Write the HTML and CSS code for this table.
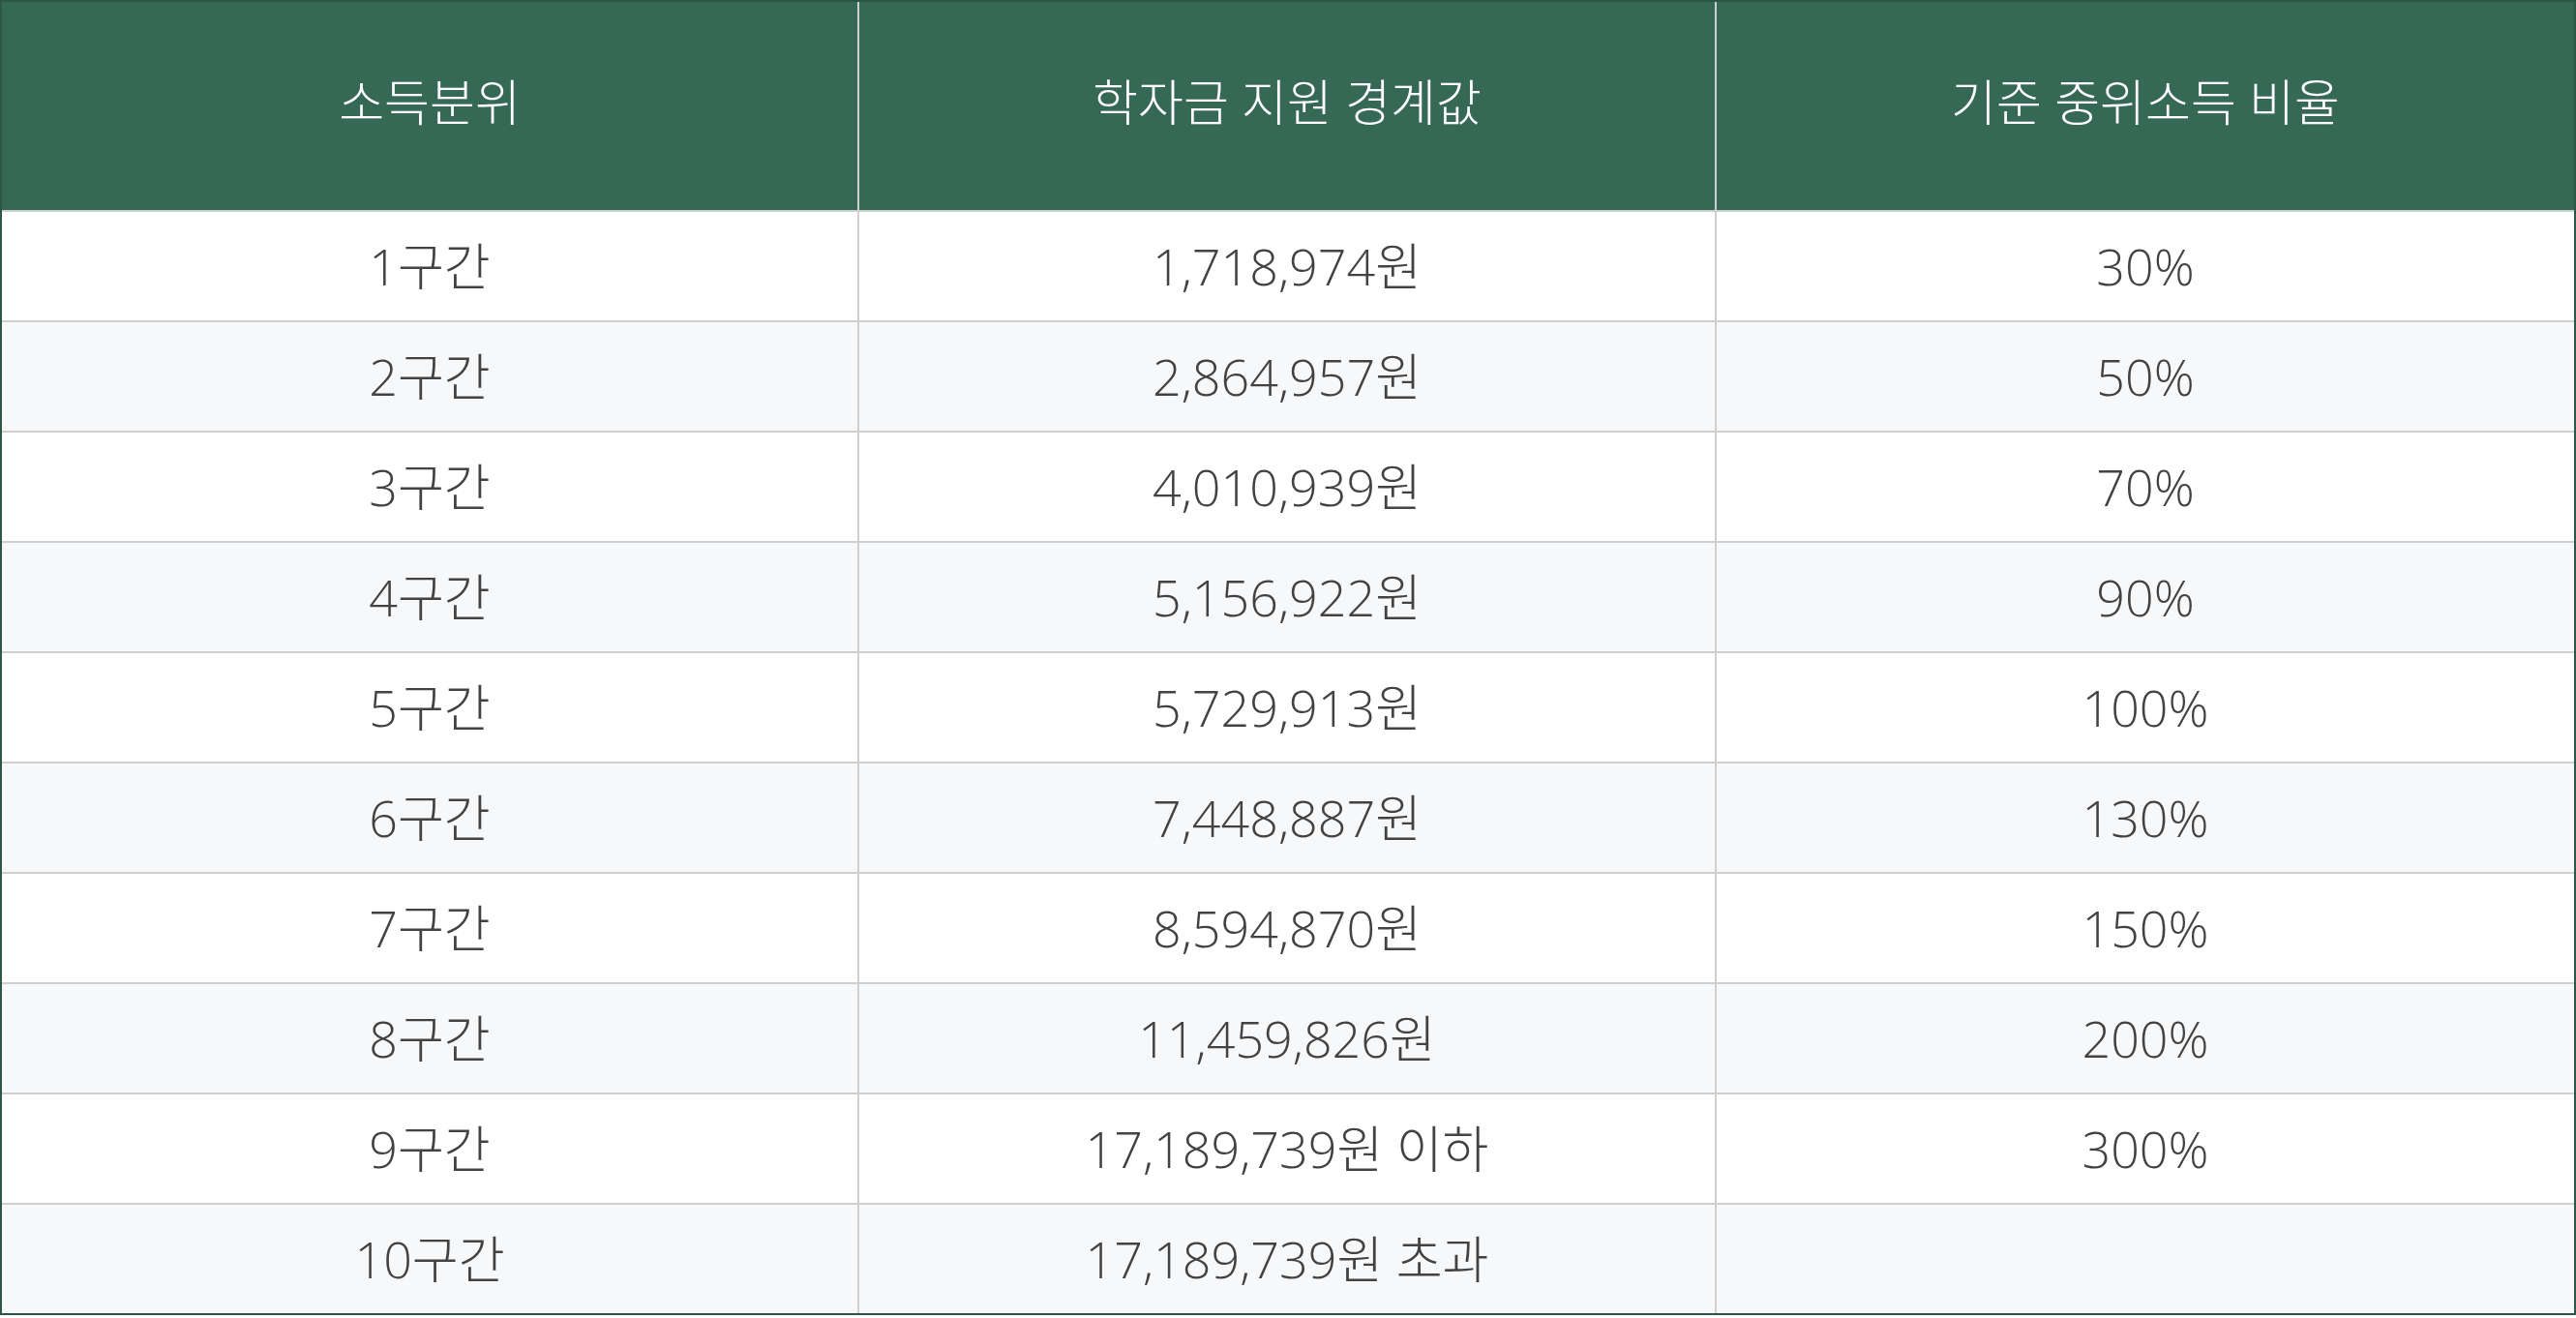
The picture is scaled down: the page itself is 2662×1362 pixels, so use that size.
FILE: index.html
```html
<!DOCTYPE html>
<html lang="ko">
<head>
<meta charset="utf-8">
<title>소득분위별 학자금 지원 경계값</title>
<link rel="stylesheet" href="styles.css">
</head>
<body>
<table class="income-table">
  <thead>
    <tr>
      <th>소득분위</th>
      <th>학자금 지원 경계값</th>
      <th>기준 중위소득 비율</th>
    </tr>
  </thead>
  <tbody>
    <tr><td>1구간</td><td>1,718,974원</td><td>30%</td></tr>
    <tr><td>2구간</td><td>2,864,957원</td><td>50%</td></tr>
    <tr><td>3구간</td><td>4,010,939원</td><td>70%</td></tr>
    <tr><td>4구간</td><td>5,156,922원</td><td>90%</td></tr>
    <tr><td>5구간</td><td>5,729,913원</td><td>100%</td></tr>
    <tr><td>6구간</td><td>7,448,887원</td><td>130%</td></tr>
    <tr><td>7구간</td><td>8,594,870원</td><td>150%</td></tr>
    <tr><td>8구간</td><td>11,459,826원</td><td>200%</td></tr>
    <tr><td>9구간</td><td>17,189,739원 이하</td><td>300%</td></tr>
    <tr><td>10구간</td><td>17,189,739원 초과</td><td></td></tr>
  </tbody>
</table>
</body>
</html>
```
FILE: styles.css
```css
html, body {
  margin: 0;
  padding: 0;
  background: #ffffff;
}

.income-table {
  width: 100%;
  table-layout: fixed;
  border-collapse: separate;
  border-spacing: 0;
  border: 2px solid #2c5646;
  font-family: "Open Sans", "Noto Sans CJK KR", sans-serif;
  font-weight: 300;
  font-size: 52px;
  line-height: 1.2;
}

.income-table th,
.income-table td {
  padding: 0;
  text-align: center;
  vertical-align: middle;
  border-right: 2px solid #cfcfcf;
  border-bottom: 2px solid #cfcfcf;
}

.income-table th:last-child,
.income-table td:last-child {
  border-right: none;
}

.income-table tbody tr:last-child td {
  border-bottom: none;
}

.income-table th {
  height: 217px;
  box-sizing: border-box;
  padding-bottom: 8px;
  background: #356855;
  color: #ffffff;
  font-size: 51px;
  font-weight: 300;
}

.income-table td {
  height: 112px;
  color: #424242;
  background: #ffffff;
}

.income-table tbody tr:nth-child(even) td {
  background: #f7f8fa;
}
```
